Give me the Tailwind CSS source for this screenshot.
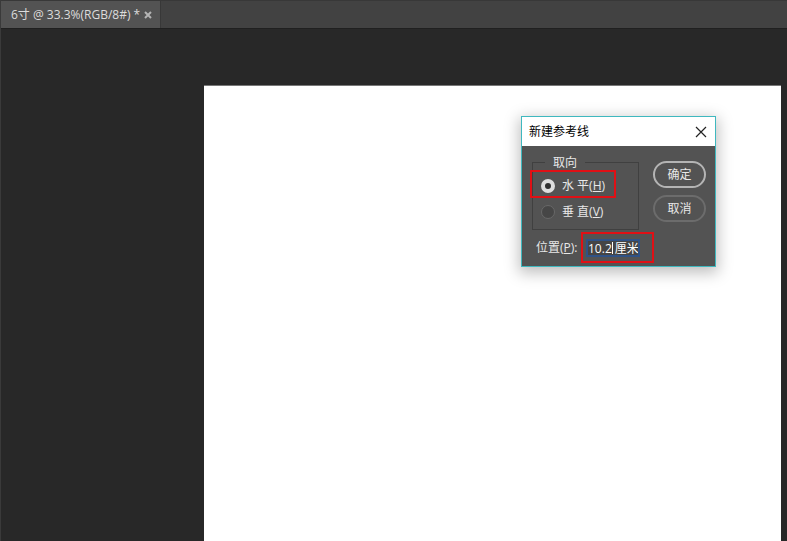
<!DOCTYPE html>
<html lang="zh-CN">

<head>
    <meta charset="UTF-8">
    <meta name="viewport" content="width=device-width, initial-scale=1.0">
    <title>新建参考线</title>
    <script src="https://cdn.jsdelivr.net/npm/@tailwindcss/browser@4"></script>
</head>

<body class="flex h-screen flex-col overflow-hidden border-l border-[#3a3a3a] bg-[#282828] font-['Open_Sans','Noto_Sans_CJK_SC',sans-serif] text-xs">

    <header class="flex h-7 shrink-0 border-t border-[#383838] bg-[#424242]">
        <div class="flex items-center gap-0.5 border-r border-[#383838] bg-[#535353] pr-1.5 pl-2.5 text-[#dcdcdc]">
            <span class="whitespace-pre">6寸 @ 33.3%(RGB/8#) *</span>
            <button type="button" aria-label="关闭文档" class="p-0.5">
                <svg class="size-2" viewBox="0 0 8 8" fill="none" stroke="#b4b4b4" stroke-width="2">
                    <path d="M1 1l6 6M7 1l-6 6" />
                </svg>
            </button>
        </div>
    </header>

    <main class="flex flex-1 border-t border-[#202020] pt-14 pr-1.5 pl-[203px]">
        <div class="flex-1 border-t border-[#777] bg-white"></div>
    </main>

    <!-- dialog -->
    <section role="dialog" aria-labelledby="dialog-title"
        class="absolute top-29 right-[71px] w-[195px] border border-[#3fb8bf] bg-[#535353] text-[#e8e8e8] shadow-[0_4px_14px_2px_rgba(0,0,0,0.25)]">
        <div class="flex h-[29px] items-center justify-between bg-white px-[7px] text-black">
            <h1 id="dialog-title">新建参考线</h1>
            <button type="button" aria-label="关闭" class="p-px">
                <svg class="size-3" viewBox="0 0 12 12" fill="none" stroke="#222" stroke-width="1.2">
                    <path d="M1 1l10 10M11 1L1 11" />
                </svg>
            </button>
        </div>

        <form class="px-2.5 pt-2 pb-1">
            <div class="flex justify-between">
                <fieldset class="relative mt-2 h-[68px] w-[107px] border border-[#404040]">
                    <legend class="absolute -top-2 left-3 bg-[#535353] px-2 leading-4">取向</legend>
                    <div class="flex flex-col gap-2.5 pt-[15px] pl-2">
                        <label class="flex h-4 items-center gap-[7px]">
                            <input type="radio" name="dir" checked
                                class="size-3.5 appearance-none rounded-full border border-[#686868] bg-[#464646] checked:border-4 checked:border-[#dedede] checked:bg-[#303030]">
                            <span>水 平(<u>H</u>)</span>
                        </label>
                        <label class="flex h-4 items-center gap-[7px]">
                            <input type="radio" name="dir"
                                class="size-3.5 appearance-none rounded-full border border-[#686868] bg-[#464646] checked:border-4 checked:border-[#dedede] checked:bg-[#303030]">
                            <span>垂 直(<u>V</u>)</span>
                        </label>
                    </div>
                </fieldset>
                <div class="-mr-px flex w-[53px] flex-col gap-[7px] pt-[7px]">
                    <button type="button" class="h-[27px] rounded-full border-2 border-[#b4b4b4]">确定</button>
                    <button type="button" class="h-[27px] rounded-full border-2 border-[#6c6c6c]">取消</button>
                </div>
            </div>
            <div class="flex h-8 items-center pt-1 pl-1">
                <label for="position" class="w-[50px] whitespace-nowrap">位置(<u>P</u>):</label>
                <div class="relative">
                    <input id="position" type="text" value="10.2 厘米"
                        class="block h-[18px] w-[54px] border-2 border-[#2f5286] bg-[#454545] text-white outline-none">
                    <span class="absolute top-[3px] left-[26px] h-3 w-px bg-white"></span>
                </div>
            </div>
        </form>

        <!-- highlight boxes -->
        <div class="absolute top-[53px] left-2 h-7 w-[86px] border-2 border-[#e01015]"></div>
        <div class="absolute top-[115px] left-[59px] h-[31px] w-[73px] border-2 border-[#e01015]"></div>
    </section>

</body>

</html>
